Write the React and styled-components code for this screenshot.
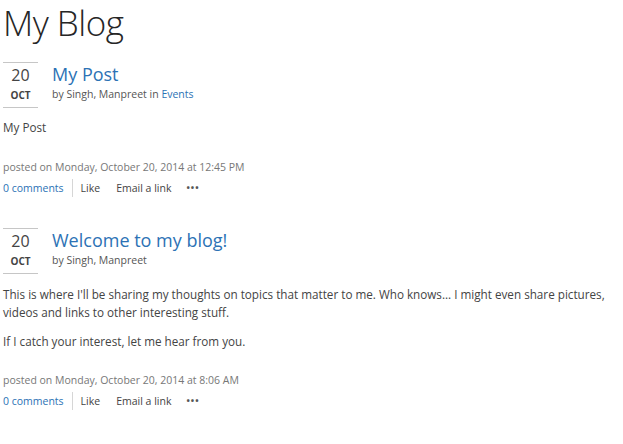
import styled, { createGlobalStyle } from 'styled-components'

const GlobalStyle = createGlobalStyle`
  html, body {
    margin: 0;
    padding: 0;
    background: #fff;
  }
  body {
    font-family: "Open Sans", "Noto Sans", sans-serif;
    color: #444;
  }
`

const Page = styled.div`
  padding: 0 3px;
`
const Title = styled.h1`
  margin: 0;
  padding-top: 3px;
  font-family: "Open Sans", sans-serif;
  font-weight: 300;
  font-size: 35px;
  line-height: 40px;
  color: #262626;
  letter-spacing: -0.5px;
`
const Post = styled.div`
  margin-top: ${(props) => props.top}px;
`
const PostHeader = styled.div`
  display: flex;
  align-items: flex-start;
  gap: 14px;
`
const DateBox = styled.div`
  width: 35px;
  border-top: 1px solid #c6c6c6;
  border-bottom: 1px solid #c6c6c6;
  display: flex;
  flex-direction: column;
  align-items: center;
  padding: 1px 0 3px;
`
const Day = styled.span`
  font-size: 16px;
  line-height: 22px;
  color: #444;
`
const Month = styled.span`
  font-size: 10px;
  font-weight: 700;
  line-height: 18px;
  color: #444;
`
const HeadText = styled.div`
  display: flex;
  flex-direction: column;
  padding-top: 1px;
`
const PostTitle = styled.a`
  font-size: 18px;
  line-height: 22px;
  color: #2c72b5;
  text-decoration: none;
`
const Byline = styled.div`
  font-size: 10.5px;
  line-height: 18px;
  color: #555;
`
const Link = styled.a`
  color: #2c72b5;
  text-decoration: none;
`
const Body = styled.div`
  margin-top: ${(props) => props.top}px;
  font-size: 11.7px;
  color: #444;
  p {
    margin: 0 0 11px;
    line-height: 18px;
  }
`
const Posted = styled.div`
  margin-top: ${(props) => props.top}px;
  font-size: 10.5px;
  line-height: 18px;
  color: #777;
`
const Actions = styled.div`
  display: flex;
  align-items: center;
  margin-top: 3px;
  font-size: 10.5px;
  line-height: 18px;
  color: #444;
`
const Action = styled.span`
  padding: 0 8px;
  color: ${(props) => (props.link ? '#2c72b5' : '#444')};
  border-right: ${(props) => (props.divider ? '1px solid #d6d6d6' : 'none')};
  &:first-child {
    padding-left: 0;
  }
`
const Dots = styled.span`
  padding-left: 7px;
  letter-spacing: 1px;
  font-weight: 700;
  font-size: 9px;
  color: #555;
`

function PostItem({ top, title, category, children, bodyTop, postedTop, date }) {
  return (
    <Post top={top}>
      <PostHeader>
        <DateBox>
          <Day>20</Day>
          <Month>OCT</Month>
        </DateBox>
        <HeadText>
          <PostTitle>{title}</PostTitle>
          <Byline>
            by Singh, Manpreet
            {category && (
              <>
                {' '}in <Link>{category}</Link>
              </>
            )}
          </Byline>
        </HeadText>
      </PostHeader>
      <Body top={bodyTop}>{children}</Body>
      <Posted top={postedTop}>posted on Monday, October 20, 2014 at {date}</Posted>
      <Actions>
        <Action link divider>0 comments</Action>
        <Action>Like</Action>
        <Action>Email a link</Action>
        <Dots>•••</Dots>
      </Actions>
    </Post>
  )
}

export default function App() {
  return (
    <Page>
      <GlobalStyle />
      <Title>My Blog</Title>
      <PostItem top={19} title="My Post" category="Events" bodyTop={10} postedTop={22} date="12:45 PM">
        <p>My Post</p>
      </PostItem>
      <PostItem top={31} title="Welcome to my blog!" bodyTop={11} postedTop={21} date="8:06 AM">
        <p>
          This is where I'll be sharing my thoughts on topics that matter to me. Who knows... I might even share
          pictures, videos and links to other interesting stuff.
        </p>
        <p>If I catch your interest, let me hear from you.</p>
      </PostItem>
    </Page>
  )
}
